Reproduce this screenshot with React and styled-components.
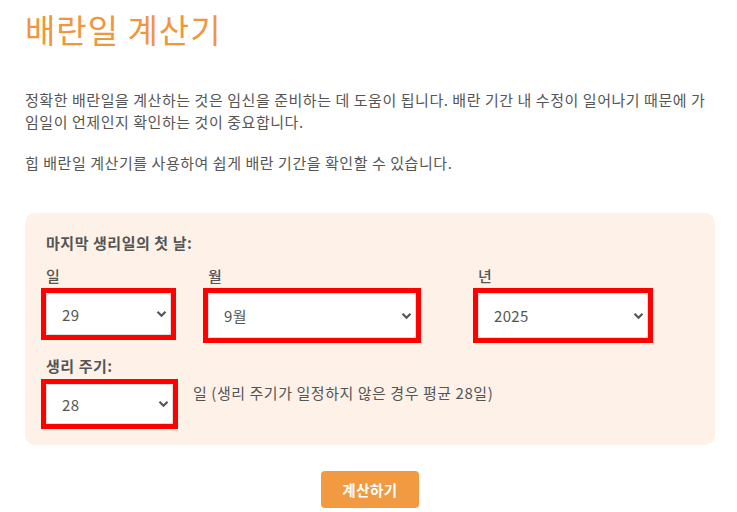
import React from "react";
import styled, { createGlobalStyle } from "styled-components";

const Global = createGlobalStyle`
  html, body { margin: 0; padding: 0; background: #fff; }
  body { font-family: "Noto Sans CJK KR", "Noto Sans", sans-serif; color: #555; }
  * { box-sizing: border-box; }
`;

const Page = styled.div`
  width: 737px;
  padding: 0 22px 0 25px;
`;

const Title = styled.h1`
  margin: 10px 0 41px;
  font-size: 33px;
  line-height: 38px;
  font-weight: 400;
  letter-spacing: 1px;
  color: #f0963d;
`;

const Para = styled.p`
  margin: 0 0 ${(p) => (p.$gap ? "19px" : "0")};
  font-size: 15px;
  line-height: 22px;
  letter-spacing: 0.55px;
  color: #555;
`;

const Panel = styled.div`
  margin-top: 39px;
  width: 690px;
  background: #fdf1e8;
  border-radius: 10px;
  padding: 20px 20px 21px 21px;
`;

const Heading = styled.div`
  font-size: 15px;
  line-height: 20px;
  font-weight: 700;
  letter-spacing: 0.55px;
  color: #555;
  margin-bottom: ${(p) => p.$mb || "13px"};
  margin-top: ${(p) => p.$mt || "0"};
`;

const DateGrid = styled.div`
  display: grid;
  grid-template-columns: 162px 270px 172px;
  align-items: start;
`;

const Field = styled.div`
  display: flex;
  flex-direction: column;
  gap: 7px;
`;

const FieldLabel = styled.label`
  font-size: 15px;
  line-height: 20px;
  font-weight: 500;
  color: #555;
`;

const SelectWrap = styled.div`
  position: relative;
  width: ${(p) => p.$w}px;
  height: ${(p) => p.$h || 42}px;
  outline: 5px solid #ff0000;
`;

const Select = styled.select`
  appearance: none;
  -webkit-appearance: none;
  width: 100%;
  height: 100%;
  background: #fff;
  border: 1px solid #dcdcdc;
  border-radius: 3px;
  box-shadow: 1px 1px 2px rgba(0, 0, 0, 0.18);
  padding: 0 24px 0 15px;
  font-family: "Noto Sans CJK KR", "Noto Sans", sans-serif;
  font-size: 15px;
  letter-spacing: 0.3px;
  color: #555;
  outline: none;
`;

const Chevron = styled.svg`
  position: absolute;
  right: 4px;
  top: 50%;
  margin-top: -4px;
  width: 11px;
  height: 8px;
  pointer-events: none;
`;

const CycleRow = styled.div`
  display: flex;
  align-items: flex-start;
  gap: 20px;
`;

const Note = styled.span`
  font-size: 15px;
  line-height: 22px;
  letter-spacing: 0.55px;
  color: #555;
  margin-top: -2px;
`;

const ButtonRow = styled.div`
  width: 690px;
  display: flex;
  justify-content: center;
  margin-top: 26px;
`;

const Button = styled.button`
  width: 98px;
  height: 37px;
  border: none;
  border-radius: 4px;
  background: #f19a42;
  color: #fff;
  font-family: "Noto Sans CJK KR", "Noto Sans", sans-serif;
  font-size: 14.5px;
  letter-spacing: 0.5px;
  font-weight: 700;
  cursor: pointer;
`;

function Drop({ w, h, value, options }) {
  return (
    <SelectWrap $w={w} $h={h}>
      <Select defaultValue={value}>
        {options.map((o) => (
          <option key={o} value={o}>
            {o}
          </option>
        ))}
      </Select>
      <Chevron viewBox="0 0 11 8">
        <path d="M1.5 1.8 L5.5 5.8 L9.5 1.8" fill="none" stroke="#555" strokeWidth="2.2" />
      </Chevron>
    </SelectWrap>
  );
}

const days = Array.from({ length: 31 }, (_, i) => String(i + 1));
const months = Array.from({ length: 12 }, (_, i) => `${i + 1}월`);
const years = ["2024", "2025", "2026"];
const cycles = Array.from({ length: 25 }, (_, i) => String(i + 20));

export default function App() {
  return (
    <>
      <Global />
      <Page>
        <Title>배란일 계산기</Title>
        <Para $gap>
          정확한 배란일을 계산하는 것은 임신을 준비하는 데 도움이 됩니다. 배란 기간 내 수정이 일어나기 때문에 가임일이 언제인지 확인하는 것이 중요합니다.
        </Para>
        <Para>힙 배란일 계산기를 사용하여 쉽게 배란 기간을 확인할 수 있습니다.</Para>
        <Panel>
          <Heading>마지막 생리일의 첫 날:</Heading>
          <DateGrid>
            <Field>
              <FieldLabel>일</FieldLabel>
              <Drop w={125} value="29" options={days} />
            </Field>
            <Field>
              <FieldLabel>월</FieldLabel>
              <Drop w={208} h={45} value="9월" options={months} />
            </Field>
            <Field>
              <FieldLabel>년</FieldLabel>
              <Drop w={170} h={45} value="2025" options={years} />
            </Field>
          </DateGrid>
          <Heading $mt="18px" $mb="8px">생리 주기:</Heading>
          <CycleRow>
            <Drop w={127} h={40} value="28" options={cycles} />
            <Note>일 (생리 주기가 일정하지 않은 경우 평균 28일)</Note>
          </CycleRow>
        </Panel>
        <ButtonRow>
          <Button>계산하기</Button>
        </ButtonRow>
      </Page>
    </>
  );
}
